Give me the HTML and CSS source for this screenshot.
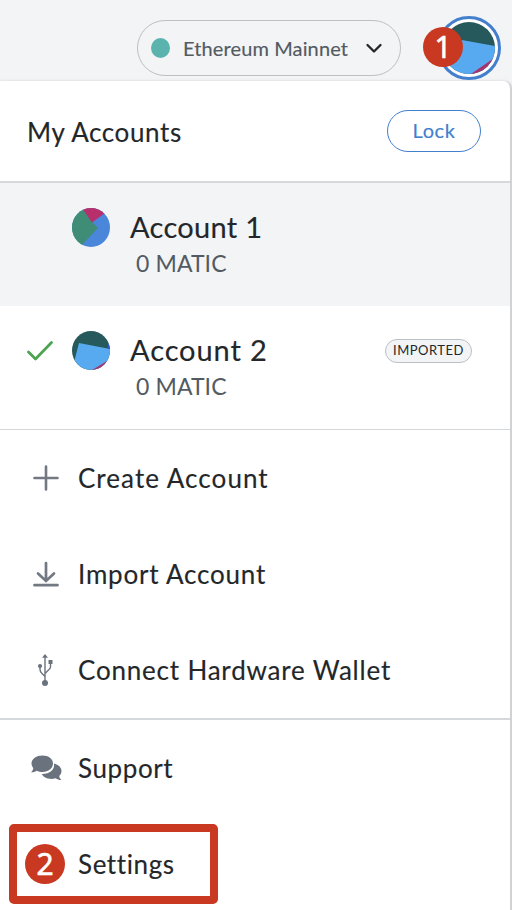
FILE: index.html
```html
<!DOCTYPE html>
<html lang="en">
<head>
<meta charset="utf-8">
<title>My Accounts</title>
<link rel="stylesheet" href="styles.css">
</head>
<body>
<header class="topbar">
  <div class="network">
    <span class="network-dot"></span>
    <span class="network-name">Ethereum Mainnet</span>
    <svg class="chevron" viewBox="0 0 18 11"><path d="M2.500 2l6.500 6.500l6.500-6.500" fill="none" stroke="#24272a" stroke-width="2.300" stroke-linecap="round" stroke-linejoin="round"/></svg>
  </div>
  <div class="profile">
    <svg class="profile-avatar" viewBox="0 0 64 64"><defs><clipPath id="top"><circle cx="32" cy="32" r="26"/></clipPath></defs><circle cx="32" cy="32" r="30.500" fill="#fff" stroke="#437fcd" stroke-width="3"/><g clip-path="url(#top)"><path fill="#26595c" d="M0 0h64v64H0z"/><path fill="#58aaf0" d="M8 21l50 9v34H0z"/><path fill="#a5366d" d="M31 60L57 42v22H31z"/></g></svg>
    <span class="badge badge-one">1</span>
  </div>
</header>
<main class="panel">
  <section class="heading"><h1 class="title">My Accounts</h1><button class="lock">Lock</button></section>
  <section class="account selected">
    <span class="check"></span>
    <svg class="avatar" viewBox="0 0 38 39"><defs><clipPath id="one"><ellipse cx="19" cy="19.500" rx="19" ry="19.500"/></clipPath></defs><g clip-path="url(#one)"><path fill="#4a86da" d="M0 0h38v39H0z"/><path fill="#3f8d76" d="M0 0H10L20 14l6 6L8 39H0z"/><path fill="#b72f6b" d="M10 0h28L33 5 20 14.500z"/></g></svg>
    <div class="details"><span class="name name-one">Account 1</span><span class="balance">0 MATIC</span></div>
  </section>
  <section class="account">
    <svg class="check" viewBox="0 0 27 20"><path d="M1.500 11l7 7L24.500 1.500" fill="none" stroke="#4ba550" stroke-width="2.700" stroke-linecap="round" stroke-linejoin="round"/></svg>
    <svg class="avatar" viewBox="0 0 38 39"><defs><clipPath id="two"><ellipse cx="19" cy="19.500" rx="19" ry="19.500"/></clipPath></defs><g clip-path="url(#two)"><path fill="#26595c" d="M0 0h38v39H0z"/><path fill="#58aaf0" d="M7 12l31 6v21H0z"/><path fill="#355cc8" d="M36 13h2v5h-2z"/><path fill="#a5366d" d="M20 39l15-9v9z"/></g></svg>
    <div class="details"><span class="name name-two">Account 2</span><span class="balance">0 MATIC</span></div>
    <span class="imported">IMPORTED</span>
  </section>
  <nav class="menu">
    <div class="item"><svg class="icon" viewBox="0 0 32 32"><path d="M16 4.500v23M4.500 16h23" fill="none" stroke="#727982" stroke-width="2.600" stroke-linecap="round"/></svg><span class="create">Create Account</span></div>
    <div class="item"><svg class="icon" viewBox="0 0 32 32"><path d="M16 5v17M8 15.500l8 7.500 8-7.500M4.500 27.200h23" fill="none" stroke="#727982" stroke-width="2.700" stroke-linecap="round"/></svg><span class="import">Import Account</span></div>
    <div class="item"><svg class="icon" viewBox="0 0 32 32"><g fill="#6a737d"><path d="M15 0l3 3.800h-6z"/><circle cx="15" cy="29" r="3"/><circle cx="10" cy="12" r="2.100"/><path d="M18.500 6h4v4h-4z"/></g><path d="M15 3v25M10 12v3.500q0 2 2 4l3 3M20.500 8v5q0 1.500-2 3L15 19.500" fill="none" stroke="#6a737d" stroke-width="1.400"/></svg><span class="connect">Connect Hardware Wallet</span></div>
  </nav>
  <nav class="menu lower">
    <div class="item"><svg class="icon" viewBox="0 0 32 32"><g fill="#6a737d"><path d="M24 11.500c4.500 1.100 7.500 4 7.500 7.600 0 2-.9 3.700-2.300 5 .2 1.600 1.200 2.900 2.300 4-2.200.1-4.200-.8-5.800-1.800-6 1.700-12-.3-14-4.300 7.600.3 13.400-4.200 12.300-10.500z"/><path d="M12.500 3.500C18.500 3.500 23 7 23 11.500s-4.500 8.500-10.500 8.500c-2.200 0-4.200-.4-5.900-1.300-1.700 1.200-3.500 1.700-5.600 1.600 1.200-1.100 2.100-2.600 2.300-4.100C2.200 14.500 1.500 13 1.500 11.500c0-4.500 5-8 11-8z"/></g></svg><span class="support">Support</span></div>
    <div class="item settings"><span class="badge">2</span><span class="settings-label">Settings</span></div>
  </nav>
</main>
</body>
</html>
```
FILE: styles.css
```css
* { box-sizing: border-box; }
body { margin: 0; height: 910px; overflow: hidden; background: #f2f4f6; color: #24272a; font-family: Lato, "Liberation Sans", sans-serif; }
svg { display: block; flex-shrink: 0; }
span, h1 { white-space: nowrap; }
.topbar { height: 81px; padding: 20px 11px 0 137px; display: flex; justify-content: space-between; }
.network { width: 264px; height: 56px; border: 1px solid #bbc0c5; border-radius: 28px; padding: 0 17px 0 13px; display: flex; align-items: center; }
.network-dot { width: 19px; height: 20px; border-radius: 50%; background: #5bb3ad; margin-right: 13px; }
.network-name { font-size: 20px; letter-spacing: .12px; margin-top: -1px; color: #535a61; -webkit-text-stroke: .15px; }
.chevron { width: 18px; height: 11px; margin-left: auto; }
.profile { position: relative; width: 64px; height: 64px; margin-top: -4px; }
.profile-avatar { width: 64px; height: 64px; }
.badge { width: 40px; height: 40px; border-radius: 50%; background: #c93820; color: #fff; font-family: "Noto Sans", sans-serif; font-size: 30px; font-weight: 400; line-height: 40px; text-align: center; -webkit-text-stroke: .6px; }
.badge-one { position: absolute; left: -14px; top: 11px; }
.panel { width: 512px; height: 831px; background: #fff; border-right: 2px solid #d0d2d4; border-radius: 0 8px 0 0; box-shadow: 0 0 3px #0002; }
.heading { height: 102px; border-bottom: 2px solid #d6d9dc; padding: 0 29px 0 27px; display: flex; align-items: center; justify-content: space-between; }
.title { margin: 2px 0 0; font-size: 26px; font-weight: 400; letter-spacing: .6px; -webkit-text-stroke: .15px; }
.lock { width: 94px; height: 42px; margin-top: -1px; border: 1px solid #437fcd; border-radius: 21px; background: #fff; color: #437fcd; font: 20px Lato, sans-serif; letter-spacing: .6px; -webkit-text-stroke: .15px; padding: 0 0 2px; }
.account { height: 124px; padding: 25px 38px 0 27px; display: flex; align-items: flex-start; border-bottom: 1px solid #d6d9dc; }
.selected { height: 123px; background: #f2f4f6; border: 0; }
.check { width: 27px; height: 20px; margin: 10px 18px 0 0; }
.avatar { width: 38px; height: 39px; margin-right: 20px; }
.details { display: flex; flex-direction: column; margin-top: -1px; }
.name { font-size: 29px; line-height: 40px; -webkit-text-stroke: .15px; }
.name-one { letter-spacing: .3px; }
.name-two { letter-spacing: .9px; }
.balance { font-size: 23px; line-height: 30px; margin: 1px 0 0 6px; letter-spacing: .1px; color: #535a61; }
.imported { width: 87px; height: 24px; margin: 8px 0 0 auto; border: 1px solid #bbc0c5; border-radius: 12px; background: #f2f4f6; font-size: 13px; line-height: 21px; letter-spacing: .5px; text-align: center; }
.menu { display: flex; flex-direction: column; }
.lower { border-top: 2px solid #d6d9dc; }
.item { height: 96px; padding-left: 30px; display: flex; align-items: center; font-size: 26px; -webkit-text-stroke: .15px; letter-spacing: .6px; }
.create { letter-spacing: 1.05px; }
.import { letter-spacing: .8px; }
.connect { letter-spacing: .8px; }
.icon { width: 32px; height: 32px; margin-right: 16px; }
.settings { width: 209px; height: 80px; margin: 8px 0 0 9px; border: 8px solid #c93820; border-radius: 5px; padding-left: 8px; }
.settings .badge { margin-right: 13px; letter-spacing: 0; }
```
